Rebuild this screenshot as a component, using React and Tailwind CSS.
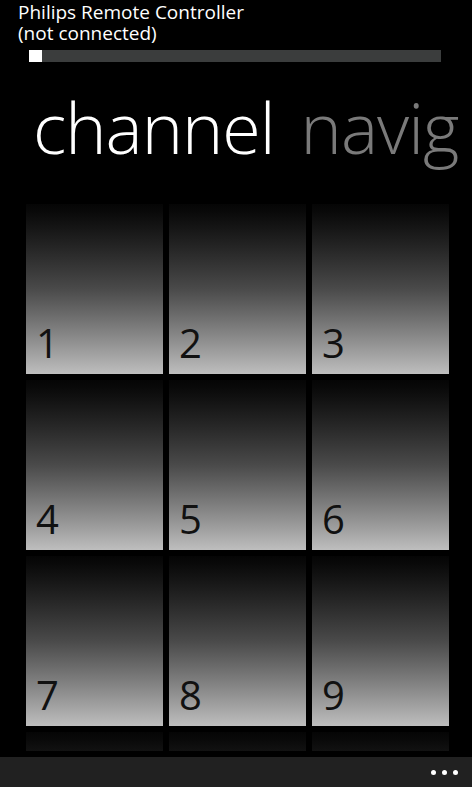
import React from "react";

const keys = ["1", "2", "3", "4", "5", "6", "7", "8", "9", "", "", ""];

const App = () => {
  return (
    <div className="relative flex h-[787px] w-[472px] flex-col overflow-hidden bg-black font-['Open_Sans',sans-serif] text-white">
      {/* header */}
      <div className="pl-[18px] pt-[2px] text-[19px] leading-[21px]">
        <div>Philips Remote Controller</div>
        <div>(not connected)</div>
      </div>

      {/* progress */}
      <div className="ml-[29px] mt-[6px] flex h-[12px] w-[412px] bg-[#3b3d3d]">
        <div className="h-full w-[13px] bg-white" />
      </div>

      {/* pivot titles */}
      <div className="mt-[25px] flex gap-[26px] whitespace-nowrap pl-[33px] text-[70px] font-light leading-[80px] tracking-[-1px]">
        <span>channel</span>
        <span className="text-[#7a7a7a]">navig</span>
      </div>

      {/* keypad */}
      <div className="mt-[37px] h-[547px] overflow-hidden pl-[26px]">
        <div className="grid grid-cols-[137px_137px_137px] gap-x-[6px] gap-y-[6px]">
          {keys.map((k, i) => (
            <div
              key={i}
              className="flex h-[170px] items-end bg-gradient-to-b from-[#050505] via-[#4a4a4a] to-[#bebebe] px-[10px] pb-[7px]"
            >
              <span className="text-[40px] font-normal leading-[48px] text-[#111]">{k}</span>
            </div>
          ))}
        </div>
      </div>

      {/* app bar */}
      <div className="absolute bottom-0 left-0 flex h-[30px] w-full items-center justify-end gap-[6px] bg-[#212121] pr-[14px]">
        <span className="h-[5px] w-[5px] rounded-full bg-white" />
        <span className="h-[5px] w-[5px] rounded-full bg-white" />
        <span className="h-[5px] w-[5px] rounded-full bg-white" />
      </div>
    </div>
  );
};

export default App;
